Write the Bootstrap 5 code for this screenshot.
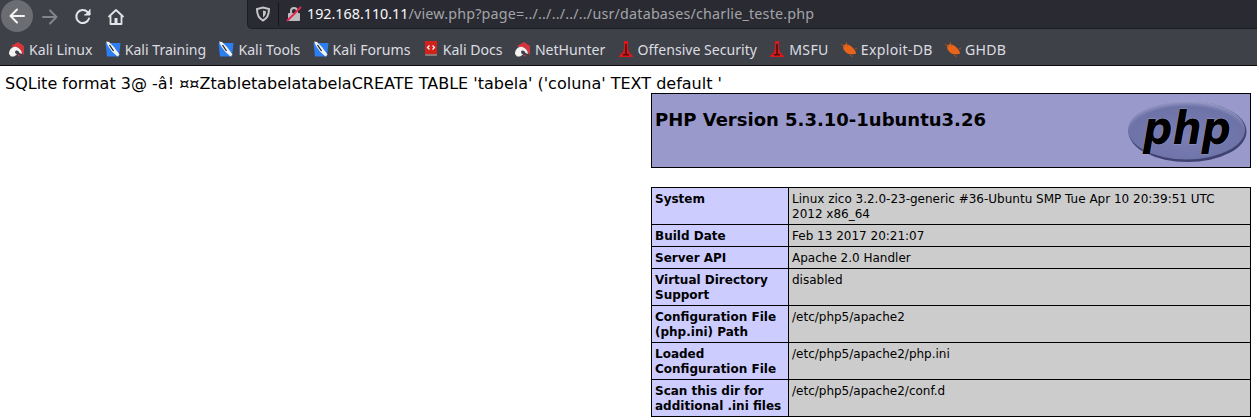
<!DOCTYPE html>
<html lang="en">
<head>
  <meta charset="UTF-8" />
  <title>phpinfo</title>
  <link href="https://cdn.jsdelivr.net/npm/bootstrap@5.3.2/dist/css/bootstrap.min.css" rel="stylesheet" />
  <style>
    body {
      background-color: #fff;
      color: #000;
      font-family: "DejaVu Sans", sans-serif;
      font-size: 16px;
      overflow: hidden;
    }

    .ff-chrome {
      background-color: #3f4149;
      border-bottom: 1px solid #0c0c0d;
      font-family: "Noto Sans", sans-serif;
      height: 66px;
    }

    .ff-navrow {
      height: 33px;
    }

    .ff-btn-round {
      width: 32px;
      height: 32px;
      border-radius: 50%;
      background-color: #6c6d73;
      margin-left: 1px;
      margin-top: -2px;
    }

    .ff-btn {
      width: 33px;
    }

    .ff-urlbar {
      background-color: #2a2b32;
      border: 1px solid #1d1e23;
      border-top: 0;
      border-right: 0;
      border-bottom-left-radius: 5px;
      height: 29px;
      margin-left: 115px;
      margin-top: -4px;
      padding-left: 7px;
      font-size: 14.3px;
    }

    .ff-sep {
      width: 1px;
      height: 24px;
      background-color: #15161a;
      margin: 0 7px;
    }

    .ff-host {
      color: #f9f9fa;
      margin-left: 5px;
    }

    .ff-path {
      color: #a3a4a8;
      letter-spacing: 0.2px;
    }

    .ff-bookmarks {
      height: 32px;
      padding-left: 9px;
      padding-top: 1px;
      color: #dcdde0;
      font-size: 14.1px;
      gap: 12.25px;
    }

    .ff-mark {
      gap: 4px;
      white-space: nowrap;
    }

    .ff-mark-wide {
      letter-spacing: 0.3px;
    }

    .raw-line {
      padding: 8px 0 0 5px;
      line-height: 20px;
      height: 27px;
      white-space: nowrap;
    }

    .php-wrap {
      width: 600px;
      margin-left: 651px;
    }

    .php-table {
      width: 600px;
      border-collapse: collapse;
      table-layout: fixed;
      font-size: 12px;
      line-height: 15px;
    }

    .php-table td {
      border: 1px solid #000;
      padding: 4px 3px 2px;
      vertical-align: baseline;
      color: #000;
    }

    .php-table .cell-key {
      width: 137px;
      background-color: #ccf;
      font-weight: bold;
    }

    .php-table .cell-val {
      background-color: #ccc;
    }

    .php-head {
      border: 1px solid #000;
      background-color: #99c;
      height: 75px;
      padding: 3px;
      margin-bottom: 19px;
    }

    .php-head h1 {
      font-family: "DejaVu Sans", sans-serif;
      font-size: 18px;
      font-weight: bold;
      line-height: 22px;
      margin: 12px 0 0 0;
    }

    .php-logo {
      overflow: visible;
      flex-shrink: 0;
    }
  </style>
</head>
<body>
  <div class="ff-chrome">
    <div class="ff-navrow d-flex align-items-center">
      <div class="ff-btn-round d-flex align-items-center justify-content-center">
        <svg width="18" height="18" viewBox="0 0 18 18" fill="none" stroke="#f4f4f5" stroke-width="2" stroke-linecap="round" stroke-linejoin="round"><path d="M16 9H2.500M9 2.500 2.500 9 9 15.500"/></svg>
      </div>
      <div class="ff-btn d-flex justify-content-center">
        <svg width="18" height="18" viewBox="0 0 18 18" fill="none" stroke="#84858a" stroke-width="2" stroke-linecap="round" stroke-linejoin="round"><path d="M2 9H15.500M9 2.500 15.500 9 9 15.500"/></svg>
      </div>
      <div class="ff-btn d-flex justify-content-center">
        <svg width="18" height="18" viewBox="0 0 18 18" fill="none" stroke="#e4e4e6" stroke-width="2" stroke-linecap="round" stroke-linejoin="round"><path d="M15 10.500A6.500 6.500 0 1 1 13.500 4L15.500 6"/><path d="M16 1.500V7H10.500" fill="#e4e4e6" stroke-width="1"/></svg>
      </div>
      <div class="ff-btn d-flex justify-content-center">
        <svg width="18" height="18" viewBox="0 0 18 18" fill="none" stroke="#e4e4e6" stroke-width="1.800" stroke-linejoin="round"><path d="M1.500 9 9 2l7.500 7"/><path d="M3.500 8v8h11V8"/><rect x="7.500" y="10" width="3" height="6" fill="#e4e4e6" stroke="none"/></svg>
      </div>
      <div class="ff-urlbar flex-grow-1 d-flex align-items-center">
        <svg width="16" height="16" viewBox="0 0 16 16" fill="none" stroke="#c4c4c7" stroke-width="2"><path d="M8 1.500 14 3c0 5-1 9-6 11.500C3 12 2 8 2 3Z"/><path d="M8 4.500 11 5.200C11 8 10 10 8 11.500Z" fill="#c4c4c7" stroke="none"/></svg>
        <span class="ff-sep"></span>
        <svg width="16" height="16" viewBox="0 0 16 16"><path d="M3 7h10a1 1 0 0 1 1 1v6a1 1 0 0 1-1 1H3a1 1 0 0 1-1-1V8a1 1 0 0 1 1-1Z" fill="#bdbdc0"/><path d="M5 7V5a3 3 0 0 1 6 0v2" fill="none" stroke="#bdbdc0" stroke-width="2"/><path d="M1 15 15 1" stroke="#e22850" stroke-width="2"/></svg>
        <span class="ff-host">192.168.110.11<span class="ff-path">/view.php?page=../../../../../usr/databases/charlie_teste.php</span></span>
      </div>
    </div>
    <div class="ff-bookmarks d-flex align-items-center">
      <span class="ff-mark d-flex align-items-center">
        <svg width="16" height="16" viewBox="0 0 16 16"><use href="#ico-kali"/></svg>Kali Linux
      </span>
      <span class="ff-mark d-flex align-items-center">
        <svg width="16" height="16" viewBox="0 0 16 16"><use href="#ico-train"/></svg>Kali Training
      </span>
      <span class="ff-mark d-flex align-items-center">
        <svg width="16" height="16" viewBox="0 0 16 16"><use href="#ico-train"/></svg>Kali Tools
      </span>
      <span class="ff-mark d-flex align-items-center">
        <svg width="16" height="16" viewBox="0 0 16 16"><use href="#ico-train"/></svg>Kali Forums
      </span>
      <span class="ff-mark d-flex align-items-center">
        <svg width="16" height="16" viewBox="0 0 16 16"><path d="M2 0h12v13H2Z" fill="#d3211c"/><path d="M2 13h12v2H3a1 1 0 0 1-1-1Z" fill="#8a7876"/><path d="M6.500 4.500 4.500 6.500l2 2M9.500 4.500l2 2-2 2" fill="none" stroke="#fff" stroke-width="1.200"/></svg>Kali Docs
      </span>
      <span class="ff-mark d-flex align-items-center">
        <svg width="16" height="16" viewBox="0 0 16 16"><use href="#ico-kali"/></svg>NetHunter
      </span>
      <span class="ff-mark d-flex align-items-center">
        <svg width="16" height="16" viewBox="0 0 16 16"><use href="#ico-off"/></svg>Offensive Security
      </span>
      <span class="ff-mark ff-mark-wide d-flex align-items-center">
        <svg width="16" height="16" viewBox="0 0 16 16"><use href="#ico-off"/></svg>MSFU
      </span>
      <span class="ff-mark ff-mark-wide d-flex align-items-center">
        <svg width="16" height="16" viewBox="0 0 16 16"><use href="#ico-bug"/></svg>Exploit-DB
      </span>
      <span class="ff-mark ff-mark-wide d-flex align-items-center">
        <svg width="16" height="16" viewBox="0 0 16 16"><use href="#ico-bug"/></svg>GHDB
      </span>
    </div>
  </div>

  <div class="raw-line">SQLite format 3@ -â! ¤¤ZtabletabelatabelaCREATE TABLE 'tabela' ('coluna' TEXT default '</div>

  <div class="php-wrap">
    <div class="php-head d-flex justify-content-between">
      <h1>PHP Version 5.3.10-1ubuntu3.26</h1>
      <svg class="php-logo" width="120" height="67" viewBox="0 0 120 67">
        <defs>
          <radialGradient id="php-grad" cx="0.5" cy="0.6" r="0.62">
            <stop offset="0" stop-color="#7a7eb4"/>
            <stop offset="0.8" stop-color="#6d72a7"/>
            <stop offset="1" stop-color="#a9abd2"/>
          </radialGradient>
        </defs>
        <ellipse cx="60.500" cy="34.500" rx="59" ry="30.500" fill="#3f4270"/>
        <ellipse cx="59.500" cy="33" rx="58.500" ry="29.500" fill="url(#php-grad)"/>
        <text x="60" y="47" text-anchor="middle" font-family="DejaVu Sans" font-style="oblique" font-weight="bold" font-size="46" fill="#000" stroke="#b9bbdc" stroke-width="0.600" paint-order="stroke" textLength="88" lengthAdjust="spacingAndGlyphs">php</text>
      </svg>
    </div>

    <table class="php-table">
      <tbody>
        <tr><td class="cell-key">System</td><td class="cell-val">Linux zico 3.2.0-23-generic #36-Ubuntu SMP Tue Apr 10 20:39:51 UTC 2012 x86_64</td></tr>
        <tr><td class="cell-key">Build Date</td><td class="cell-val">Feb 13 2017 20:21:07</td></tr>
        <tr><td class="cell-key">Server API</td><td class="cell-val">Apache 2.0 Handler</td></tr>
        <tr><td class="cell-key">Virtual Directory Support</td><td class="cell-val">disabled</td></tr>
        <tr><td class="cell-key">Configuration File (php.ini) Path</td><td class="cell-val">/etc/php5/apache2</td></tr>
        <tr><td class="cell-key">Loaded Configuration File</td><td class="cell-val">/etc/php5/apache2/php.ini</td></tr>
        <tr><td class="cell-key">Scan this dir for additional .ini files</td><td class="cell-val">/etc/php5/apache2/conf.d</td></tr>
      </tbody>
    </table>
  </div>

  <svg width="0" height="0" class="d-block">
    <defs>
      <g id="ico-kali">
        <path d="M2 5 9 1l6 4v9l-3-3C11 7 8 5 5 7Z" fill="#d4343c"/>
        <path d="M0 13C0 8 4 5 7.500 6c3 1 5 3 5.500 7l-2.500-1C10 10 8 9 6.500 10 5.500 11 6 12.500 8 13.500L5 15.500H2Z" fill="#f2f2f2"/>
        <path d="M8 13.500 12 15 9 15.500Z" fill="#c23b45"/>
      </g>
      <g id="ico-train">
        <path d="M0.500 2h15l-1.500 13.500H2Z" fill="#2b7fee"/>
        <path d="M1 0.500 4 1 9 6 14.500 13.500 12.500 15.500 7 10.500 3 5Z" fill="#f2f2f2"/>
        <path d="M4.500 4 8.500 10" stroke="#222" stroke-width="1.300"/>
      </g>
      <g id="ico-off">
        <path d="M6 0h4v7l1 4 4 4v1H1v-1l4-4 1-4Z" fill="#d8181c"/>
        <path d="M7.200 3h1.600v11H7.200ZM5 13h6v1.500H5Z" fill="#4e0d0d"/>
      </g>
      <g id="ico-bug">
        <path d="M2 5C4 2 8 3 11 6c2 2 4 4 4 6.500-3 1.500-8 1-10-1C3 9.500 2 8 2 5Z" fill="#e8641b"/>
        <path d="M0 3 4 6M5 1 7 5M9 14l3 2M14 8l2-1" stroke="#a8521f" stroke-width="1"/>
      </g>
    </defs>
  </svg>
</body>
</html>
